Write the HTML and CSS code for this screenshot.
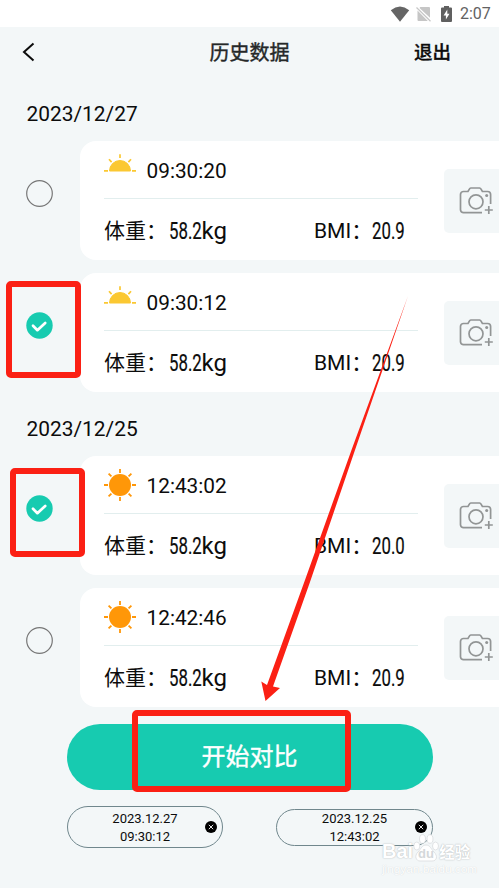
FILE: index.html
```html
<!DOCTYPE html>
<html lang="zh-CN">
<head>
<meta charset="utf-8">
<title>历史数据</title>
<link rel="stylesheet" href="styles.css">
</head>
<body>
<svg class="defs" aria-hidden="true">
  <symbol id="sunrise" viewBox="0 0 32 32">
    <path d="M5.500 17a10.500 10.500 0 0 1 21 0z" fill="#fbc832" stroke="#fbc832" stroke-linejoin="round"/>
    <path d="M0 16.800h4M28 16.800h4M16 .3v3.800M5 5.200l2.600 2.900M27 5.200l-2.600 2.900" fill="none" stroke="#fbc832" stroke-width="1.7"/>
  </symbol>
  <symbol id="sun" viewBox="0 0 32 32">
    <circle cx="16" cy="16" r="11" fill="#ff9708"/>
    <path d="M16 0v4M16 28v4M0 16h4M28 16h4M4.6 4.6l2.8 2.8M24.6 24.6l2.8 2.8M27.4 4.6l-2.8 2.8M7.4 24.6l-2.8 2.8" fill="none" stroke="#ff9708" stroke-width="1.8"/>
  </symbol>
  <symbol id="camera" viewBox="0 0 34 30">
    <g fill="none" stroke="#929595" stroke-width="1.7">
      <path d="M23 26.700H4.500a3 3 0 0 1-3-3V8.500a3 3 0 0 1 3-3H9l1.500-2.600a1.500 1.500 0 0 1 1.300-.9h8.800a1.500 1.500 0 0 1 1.300.9l1.500 2.600h5.200a3 3 0 0 1 3 3v9.500"/>
      <circle cx="17" cy="15.8" r="7"/>
      <path d="M25.800 24h8M29.800 20v8"/>
    </g>
    <circle cx="27.700" cy="9.500" r="1.5" fill="#929595"/>
  </symbol>
  <symbol id="check" viewBox="0 0 27 27">
    <circle cx="13.5" cy="13.5" r="13.2" fill="#17cbb0"/>
    <path d="M7 13.800l4.400 4.400 7.800-7.300" fill="none" stroke="#fff" stroke-width="2.700" stroke-linecap="round" stroke-linejoin="round"/>
  </symbol>
  <symbol id="circle" viewBox="0 0 27 27">
    <circle cx="13.5" cy="13.5" r="12.8" fill="none" stroke="#777" stroke-width="1.2"/>
  </symbol>
  <symbol id="remove" viewBox="0 0 12 12">
    <circle cx="6" cy="6" r="6"/>
    <path d="M3.800 3.800l4.400 4.400M8.200 3.800L3.800 8.200" stroke="#fff" stroke-width=".9"/>
  </symbol>
</svg>

<div class="status">
  <svg class="wifi" viewBox="0 0 20 16"><path d="M.8 4.200Q10-3.200 19.200 4.200L10 15.700z" fill="#656565"/></svg>
  <svg class="nosim" viewBox="0 0 16 16"><path d="M4.300 1L13 1q1 0 1 1v9.800L3.500 2zM1.500 4.500L11.800 15H2.500q-1 0-1-1z" fill="#c6c6c6"/><path d="M.5 1.500l14 13.700" stroke="#c6c6c6" stroke-width="1.2"/></svg>
  <svg class="battery" viewBox="0 0 11 16"><path d="M3 0h5v1.500h2q1 0 1 1V15q0 1-1 1H1q-1 0-1-1V2.500q0-1 1-1h2z" fill="#606060"/><path d="M6.300 3.500L2.600 9.500h2.300v4L8.500 7.700H6.300z" fill="#fff"/></svg>
  <span>2:07</span>
</div>

<header class="bar">
  <svg class="back" viewBox="0 0 14 20"><path d="M11.500 1.500L2 10l9.500 8.500" fill="none" stroke="#0c0c0c" stroke-width="2"/></svg>
  <h1>历史数据</h1>
  <span class="exit">退出</span>
</header>

<main class="list">
  <h2>2023/12/27</h2>
  <div class="row">
    <svg class="pick"><use href="#circle"/></svg>
    <div class="card">
      <div class="info">
        <div class="time"><svg><use href="#sunrise"/></svg>09:30:20</div>
        <div class="stats"><span class="weight">体重：<b>58.2</b><i>kg</i></span><span class="bmi">BMI：<b>20.9</b></span></div>
      </div>
      <div class="photo"><svg><use href="#camera"/></svg></div>
    </div>
  </div>
  <div class="row">
    <svg class="pick"><use href="#check"/></svg>
    <div class="card">
      <div class="info">
        <div class="time"><svg><use href="#sunrise"/></svg>09:30:12</div>
        <div class="stats"><span class="weight">体重：<b>58.2</b><i>kg</i></span><span class="bmi">BMI：<b>20.9</b></span></div>
      </div>
      <div class="photo"><svg><use href="#camera"/></svg></div>
    </div>
  </div>
  <h2>2023/12/25</h2>
  <div class="row">
    <svg class="pick"><use href="#check"/></svg>
    <div class="card">
      <div class="info">
        <div class="time"><svg><use href="#sun"/></svg>12:43:02</div>
        <div class="stats"><span class="weight">体重：<b>58.2</b><i>kg</i></span><span class="bmi">BMI：<b>20.0</b></span></div>
      </div>
      <div class="photo"><svg><use href="#camera"/></svg></div>
    </div>
  </div>
  <div class="row">
    <svg class="pick"><use href="#circle"/></svg>
    <div class="card">
      <div class="info">
        <div class="time"><svg><use href="#sun"/></svg>12:42:46</div>
        <div class="stats"><span class="weight">体重：<b>58.2</b><i>kg</i></span><span class="bmi">BMI：<b>20.9</b></span></div>
      </div>
      <div class="photo"><svg><use href="#camera"/></svg></div>
    </div>
  </div>
</main>

<footer>
  <div class="compare">开始对比</div>
  <div class="chips">
    <div class="chip tall"><span>2023.12.27<br>09:30:12</span><svg><use href="#remove"/></svg></div>
    <div class="chip"><span>2023.12.25<br>12:43:02</span><svg><use href="#remove"/></svg></div>
  </div>
</footer>

<div class="mark mark-first"></div>
<div class="mark mark-second"></div>
<div class="mark mark-button"></div>
<svg class="arrow" viewBox="0 0 499 888">
  <path d="M408 296L355 450L310 582L273 686.500L280 688L265.500 701L261.300 681.500L267 685L305 580L351.500 450z" fill="#fb2014"/>
</svg>
<div class="watermark">
  <div class="brand"><span>Bai</span>
    <svg viewBox="0 0 26 28"><g fill="#fff" stroke="#d9dcde" stroke-width=".8"><ellipse cx="3.800" cy="12" rx="3" ry="4"/><ellipse cx="9.500" cy="5" rx="3" ry="4.300"/><ellipse cx="17" cy="5" rx="3" ry="4.300"/><ellipse cx="22.500" cy="12" rx="3" ry="4"/><path d="M13 11c-4 0-5 4-8 7-4 4-2 9 2 9h12c5 0 6-5 2-9-3-3-4-7-8-7z"/></g><text x="13" y="24" text-anchor="middle">du</text></svg>
    <span class="cn">经验</span></div>
  <div class="site">jingyan.baidu.com</div>
</div>
</body>
</html>
```

FILE: styles.css
```css
* { box-sizing: border-box; }
body {
  margin: 0;
  position: relative;
  width: 499px;
  height: 888px;
  overflow: hidden;
  background: #f3f7f8;
  color: #0c0c0c;
  font-family: Roboto, "Noto Sans CJK SC", sans-serif;
}
svg { display: block; flex: none; }
.defs { position: absolute; width: 0; height: 0; }

.status {
  height: 27px;
  background: #fff;
  display: flex;
  align-items: center;
  justify-content: flex-end;
  padding: 0 8.500px 0 0;
  font-size: 16px;
  color: #626262;
}
.wifi { width: 20px; height: 16px; margin-right: 6px; }
.nosim { width: 16px; height: 16px; margin-right: 9px; }
.battery { width: 11px; height: 16px; margin-right: 8px; }
.status span { width: 30.500px; white-space: nowrap; }

.bar {
  height: 50px;
  display: grid;
  grid-template-columns: 150px 199px 150px;
  align-items: center;
}
.back { width: 14px; height: 20px; margin-left: 22px; }
.bar h1 {
  margin: -2px 0 0;
  text-align: center;
  font-size: 20px;
  font-weight: 400;
  color: #252828;
  -webkit-text-stroke: .4px #252828;
}
.exit { font-size: 18.500px; font-weight: 500; padding-left: 65px; margin-top: -2px; -webkit-text-stroke: .3px #0c0c0c; }

.list h2 {
  margin: 0;
  height: 64px;
  padding: 12px 0 0 26.500px;
  font-size: 20.900px;
  line-height: 51px;
  font-weight: 400;
}
.row { display: flex; align-items: center; height: 119px; }
.row + .row { margin-top: 13px; }
.pick { width: 27px; height: 27px; margin: 0 27px 0 26px; position: relative; top: -7px; }
.card {
  flex: 1;
  height: 119px;
  background: #fff;
  border-radius: 16px 0 0 16px;
  padding-left: 24px;
  display: flex;
}
.info { width: 313.500px; font-size: 21px; }
.time {
  height: 58px;
  border-bottom: 1px solid #e2eeee;
  display: flex;
  align-items: center;
  gap: 10.500px;
  padding-top: 2px;
  font-size: 20.800px;
}
.time svg { width: 32px; height: 32px; position: relative; top: -.5px; }
.stats { display: flex; justify-content: space-between; line-height: 64px; }
.stats span { display: flex; }
.stats b, .stats i { font-weight: 400; font-style: normal; }
.stats b {
  font-size: 24px;
  width: 34px;
  white-space: nowrap;
  transform: scaleX(.7);
  transform-origin: left;
  -webkit-text-stroke: .2px #0c0c0c;
}
.weight b { margin-left: 1.500px; }
.stats i { font-size: 24px; margin-left: -1px; }
.bmi { width: 103.500px; }
.photo {
  width: 55px;
  height: 63.500px;
  margin: 28px 0 0 26.500px;
  border-radius: 5px 0 0 5px;
  background: #f3f7f8;
  display: flex;
  align-items: center;
  padding-left: 15px;
}
.photo svg { width: 34px; height: 30px; }

footer { width: 366px; margin: 17px 0 0 66.500px; }
.compare {
  height: 66px;
  border-radius: 33px;
  background: #17cbb0;
  color: #fff;
  text-align: center;
  font-size: 24px;
  line-height: 67px;
  -webkit-text-stroke: .4px #fff;
}
.chips { display: flex; justify-content: space-between; align-items: center; margin-top: 16px; }
.chip {
  width: 156.500px;
  height: 37px;
  border: 1px solid #70878d;
  border-radius: 21px;
  display: flex;
  align-items: center;
  justify-content: flex-end;
  padding-right: 5px;
  font-size: 13px;
  line-height: 18px;
  text-align: center;
}
.chip.tall { height: 42px; }
.chip span { width: 67px; margin-right: 26.500px; padding-top: 1px; }
.chip svg { width: 12px; height: 12px; }

.mark { position: absolute; border: 6px solid #fb2014; border-radius: 5px; }
.mark-first { left: 6px; top: 281px; width: 75px; height: 97px; }
.mark-second { left: 10px; top: 468px; width: 75px; height: 89px; }
.mark-button { left: 132px; top: 710px; width: 219px; height: 82px; }
.arrow { position: absolute; left: 0; top: 0; width: 499px; height: 888px; }

.watermark { position: absolute; left: 382px; top: 834px; color: #fff; text-shadow: 0 0 1px #b9bec0, 0 0 2px #c8cccd; }
.brand { display: flex; align-items: flex-end; height: 29px; font: 700 20px/24px "Liberation Sans", sans-serif; }
.brand svg { width: 26px; height: 28px; margin-bottom: 1px; }
.brand text { font: 700 13px "Liberation Sans", sans-serif; fill: #d4d8da; text-shadow: none; }
.brand .cn { font: 700 15.500px/24px "Noto Sans CJK SC", sans-serif; }
.site { font: 11.800px/14px "Liberation Sans", sans-serif; margin-top: -1px; white-space: nowrap; text-shadow: 0 0 1px #c8cccd; }
```
